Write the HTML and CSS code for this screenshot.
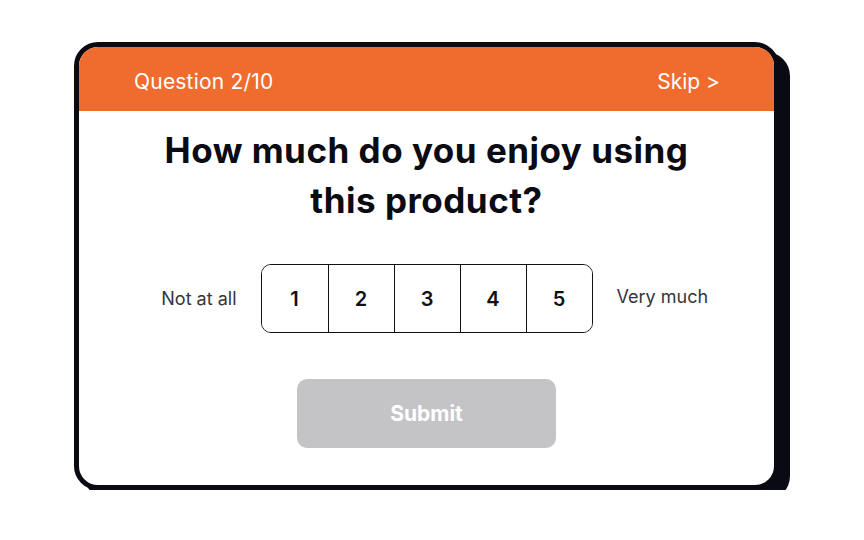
FILE: index.html
```html
<!DOCTYPE html>
<html lang="en">
<head>
    <meta charset="UTF-8">
    <meta name="viewport" content="width=device-width, initial-scale=1.0">
    <title>Survey Question</title>
    <link rel="stylesheet" href="styles.css">
</head>
<body>
    <div class="survey-card">
        <header class="survey-header">
            <span class="question-count">Question 2/10</span>
            <a class="skip-link" href="#">Skip &gt;</a>
        </header>
        <main class="survey-body">
            <h1 class="question-title">How much do you enjoy using<br>this product?</h1>
            <div class="rating-row">
                <span class="rating-label rating-label-start">Not at all</span>
                <div class="rating-scale">
                    <button class="rating-option">1</button>
                    <button class="rating-option">2</button>
                    <button class="rating-option">3</button>
                    <button class="rating-option">4</button>
                    <button class="rating-option">5</button>
                </div>
                <span class="rating-label rating-label-end">Very much</span>
            </div>
            <button class="submit-btn" disabled>Submit</button>
        </main>
    </div>
</body>
</html>
```

FILE: styles.css
```css
body {
    font-family: Inter, "Noto Sans", Arial, sans-serif;
    margin: 0;
    padding: 0;
    background-color: #fff;
    color: #0b0b13;
}
.survey-card {
    box-sizing: border-box;
    width: 705px;
    height: 448px;
    margin: 42px 0 0 74px;
    border: 5px solid #0a0a12;
    border-radius: 24px;
    box-shadow: 11px 10px 0 #0a0a12;
    background-color: #fff;
    overflow: hidden;
    display: flex;
    flex-direction: column;
}
.survey-header {
    box-sizing: border-box;
    height: 64px;
    background-color: #f06c2e;
    color: #fff;
    display: flex;
    justify-content: space-between;
    align-items: center;
    padding: 4px 54px 0 55px;
    font-size: 21px;
    letter-spacing: 0.2px;
}
.skip-link {
    color: #fff;
    text-decoration: none;
    letter-spacing: 0;
}
.survey-body {
    display: flex;
    flex-direction: column;
    align-items: center;
    padding-top: 14px;
}
.question-title {
    margin: 0;
    font-size: 35px;
    line-height: 50px;
    font-weight: 700;
    letter-spacing: 0.5px;
    text-align: center;
    color: #0b0b13;
}
.rating-row {
    align-self: stretch;
    display: grid;
    grid-template-columns: 1fr auto 1fr;
    align-items: center;
    gap: 24px;
    margin-top: 39px;
}
.rating-label {
    font-size: 18px;
    color: #35353c;
}
.rating-label-start {
    justify-self: end;
}
.rating-label-end {
    margin-top: -5px;
}
.rating-scale {
    display: flex;
    border: 1.5px solid #111;
    border-radius: 10px;
    overflow: hidden;
}
.rating-option {
    width: 66px;
    height: 67px;
    border: none;
    border-left: 1.5px solid #111;
    background-color: #fff;
    font-family: inherit;
    font-size: 20px;
    font-weight: 600;
    color: #111;
    padding: 0;
}
.rating-option:first-child {
    border-left: none;
}
.submit-btn {
    margin-top: 46px;
    width: 259px;
    height: 69px;
    border: none;
    border-radius: 10px;
    background-color: #c4c4c6;
    color: #fff;
    font-family: inherit;
    font-size: 21px;
    font-weight: 700;
}
```
